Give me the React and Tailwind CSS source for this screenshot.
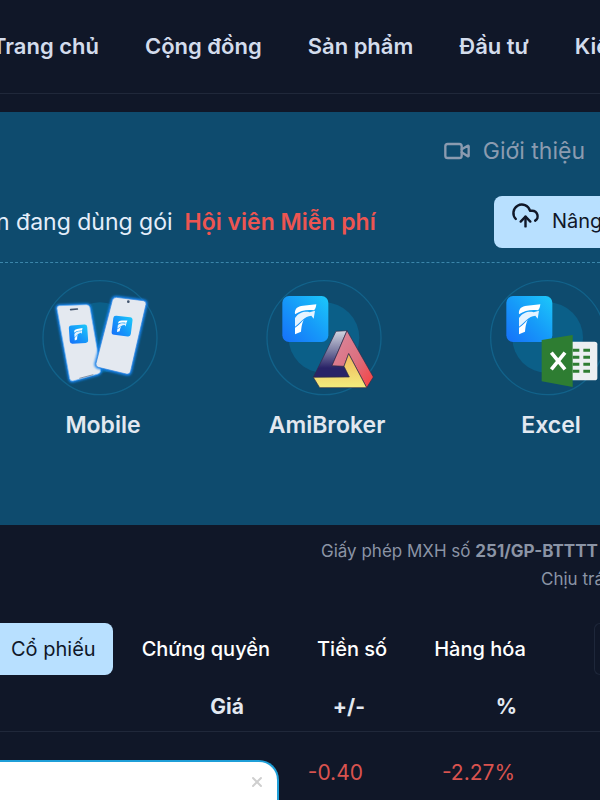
import { Video, CloudUpload, X } from 'lucide-react'

const navItems = ['Trang chủ', 'Cộng đồng', 'Sản phẩm', 'Đầu tư', 'Kiến thức']
const tabs = ['Chứng quyền', 'Tiền số', 'Hàng hóa']

function Halo({ cx }) {
  return (
    <>
      <circle cx={cx} cy="203" r="171" fill="none" stroke="#12628a" strokeWidth="4" />
      <circle cx={cx} cy="203" r="106" fill="#0b5f88" />
    </>
  )
}

// 138 x 138 app tile
function Tile({ transform }) {
  return (
    <g transform={transform}>
      <rect width="138" height="138" rx="20" fill="url(#tile)" />
      <path d="M38 55 C36 37 46 31 62 29 L102 25 C101 33 99 40 95 43 C74 40 54 44 38 55 Z" fill="#fff" />
      <path d="M38 66 C50 49 68 45 82 49 L98 44 L94 68 L87 59 C66 61 56 78 38 92 Z" fill="#e4f3ff" />
      <path d="M38 95 C50 87 57 79 64 71 C58 84 57 96 56 107 L38 115 Z" fill="#fff" />
    </g>
  )
}

function Defs() {
  return (
    <svg className="absolute size-0" aria-hidden="true">
      <defs>
        <linearGradient id="tile" x1="0" y1="1" x2="1" y2="0">
          <stop offset="0" stopColor="#1670fa" />
          <stop offset="0.5" stopColor="#169af9" />
          <stop offset="1" stopColor="#1cc9fa" />
        </linearGradient>
        <linearGradient id="navy" x1="0" y1="0" x2="0" y2="1">
          <stop offset="0" stopColor="#d3d7e2" />
          <stop offset="0.45" stopColor="#77779f" />
          <stop offset="0.8" stopColor="#292367" />
          <stop offset="1" stopColor="#292367" />
        </linearGradient>
        <linearGradient id="red" x1="0" y1="0" x2="1" y2="1">
          <stop offset="0" stopColor="#d98a9f" />
          <stop offset="0.55" stopColor="#dc7080" />
          <stop offset="1" stopColor="#f83f3d" />
        </linearGradient>
        <linearGradient id="gold" x1="0" y1="0" x2="0" y2="1">
          <stop offset="0" stopColor="#f1b65c" />
          <stop offset="1" stopColor="#f3ec7c" />
        </linearGradient>
        <filter id="glow" x="-20%" y="-20%" width="140%" height="140%">
          <feGaussianBlur stdDeviation="3" />
        </filter>
      </defs>
    </svg>
  )
}

function MobileIcon() {
  const left = 'M88 107 L169 104 Q178 104 180 113 L212 298 Q213 309 204 312 L129 333 Q121 335 119 326 L81 116 Q80 108 88 107 Z'
  const right = 'M259 82 L340 92 Q350 94 348 103 L302 303 Q299 314 289 312 L205 292 Q196 289 198 280 L247 91 Q250 82 259 82 Z'
  return (
    <svg className="size-[130px]" viewBox="24 6 390 390" aria-hidden="true">
      <Halo cx="210" />
      <path d={left} fill="#1784ef" stroke="#1784ef" strokeWidth="9" filter="url(#glow)" />
      <path d={left} fill="#e4e9f0" stroke="#69b2f5" strokeWidth="2" />
      <path d="M122 119 L142 117" stroke="#40526b" strokeWidth="5" strokeLinecap="round" />
      <path d="M148 325 L190 314" stroke="#8494a8" strokeWidth="3" />
      <Tile transform="translate(116 167) rotate(-4) scale(0.4)" />
      <path d={right} fill="#1784ef" stroke="#1784ef" strokeWidth="9" filter="url(#glow)" />
      <path d={right} fill="#e4e9f0" stroke="#2d82dc" strokeWidth="2" />
      <circle cx="295" cy="95" r="4" fill="#40526b" />
      <Tile transform="translate(251 136) rotate(7) scale(0.42)" />
    </svg>
  )
}

function AmiBrokerIcon() {
  return (
    <svg className="size-[130px]" viewBox="21 6 390 390" aria-hidden="true">
      <Halo cx="207" />
      <Tile transform="translate(82 78)" />
      <g stroke="#302b48" strokeWidth="2" strokeLinejoin="round">
        <path d="M243 184 L276 182 L231 287 L267 289 L283 321 L175 322 Z" fill="url(#navy)" />
        <path d="M276 182 L355 321 L335 353 L281 251 L267 289 L231 287 Z" fill="url(#red)" />
        <path d="M281 251 L335 353 L194 353 L175 322 L283 321 L267 289 Z" fill="url(#gold)" />
      </g>
    </svg>
  )
}

function ExcelIcon() {
  return (
    <svg className="size-[130px]" viewBox="48 6 390 390" aria-hidden="true">
      <Halo cx="233" />
      <Tile transform="translate(109 78)" />
      <rect x="290" y="215" width="92" height="116" rx="8" fill="#eceff2" />
      <path
        d="M308 241 h20 M340 241 h20 M308 262 h20 M340 262 h20 M308 283 h20 M340 283 h20 M308 304 h20 M340 304 h20"
        stroke="#2e7d32"
        strokeWidth="9"
      />
      <path d="M215 210 L308 195 V351 L215 334 Z" fill="#2e7d32" />
      <path d="M244 248 L285 298 M285 248 L244 298" stroke="#fff" strokeWidth="11" />
    </svg>
  )
}

const products = [
  { name: 'Mobile', Icon: MobileIcon },
  { name: 'AmiBroker', Icon: AmiBrokerIcon },
  { name: 'Excel', Icon: ExcelIcon },
]

export default function App() {
  return (
    <div className="relative min-h-screen overflow-hidden bg-[#101728] font-['Inter','Noto_Sans',sans-serif] text-[#e2e8f0]">
      <Defs />

      <header className="border-b border-[#20283a] pt-7 pb-[29px]">
        <nav className="-ml-2 flex gap-[46px] text-[22px] leading-9 font-semibold whitespace-nowrap text-[#d3dcec]">
          {navItems.map((item) => (
            <a key={item} href="#">{item}</a>
          ))}
        </nav>
      </header>

      <section className="mt-[18px] h-[413px] bg-[#0e4b6e]">
        <div className="flex justify-end pt-[21px] pr-[15px]">
          <a href="#" className="flex items-center gap-3 text-[23px] leading-9 text-[#8b9bb0]">
            <Video className="size-7" strokeWidth={2} />
            Giới thiệu
          </a>
        </div>

        <div className="mt-[27px] flex items-center justify-between border-b border-dashed border-[#3b86ab] pb-[14px] whitespace-nowrap">
          <p className="-ml-1 flex gap-3 text-[23px] leading-9 text-[#e4eefa]">
            n đang dùng gói
            <strong className="font-semibold text-[#ed5551]">Hội viên Miễn phí</strong>
          </p>
          <button className="flex h-[52px] w-[106px] shrink-0 gap-3 overflow-hidden rounded-l-lg bg-[#b8e0ff] pt-[5px] pl-[17px] text-xl text-[#101728]">
            <CloudUpload className="size-[29px] shrink-0" strokeWidth={2} />
            <span className="leading-10">Nâng</span>
          </button>
        </div>

        <div className="-ml-[9px] grid w-[672px] grid-cols-3 pt-[9px]">
          {products.map(({ name, Icon }) => (
            <a key={name} href="#" className="flex flex-col items-center">
              <Icon />
              <span className="mt-[5px] text-[23px] leading-9 font-semibold">{name}</span>
            </a>
          ))}
        </div>
      </section>

      <div className="flex flex-col pt-3 text-[17px] leading-7 whitespace-nowrap text-[#8b94a5]">
        <p className="ml-[321px]">
          Giấy phép MXH số <strong className="font-bold">251/GP-BTTTT</strong>
        </p>
        <p className="ml-[541px]">Chịu trách</p>
      </div>

      <div className="mt-[30px] flex items-center text-[20px] font-medium whitespace-nowrap text-white">
        <button className="h-[52px] rounded-r-lg bg-[#b8e0ff] pr-[17px] pl-[11px] font-normal text-[#101728]">Cổ phiếu</button>
        <div className="ml-[29px] flex gap-[47px]">
          {tabs.map((tab) => (
            <button key={tab}>{tab}</button>
          ))}
        </div>
        <button className="ml-auto h-[52px] w-[6px] rounded-l-lg border border-r-0 border-[#1e273a]" aria-label="Thêm" />
      </div>

      <table className="mt-2 w-full table-fixed text-right text-[21px]">
        <thead>
          <tr className="h-12 border-b border-[#20283a]">
            <th className="w-[244px] font-bold">Giá</th>
            <th className="w-[121px] font-bold">+/-</th>
            <th className="w-[152px] font-bold">%</th>
            <th aria-hidden="true" />
          </tr>
        </thead>
        <tbody>
          <tr className="h-[82px] text-[#d9534f]">
            <td />
            <td className="pr-[2px]">-0.40</td>
            <td className="pr-[2px]">-2.27%</td>
            <td />
          </tr>
        </tbody>
      </table>

      <aside className="fixed bottom-0 left-0 flex h-10 w-[279px] items-start justify-end rounded-tr-[20px] border-t-2 border-r-2 border-[#1f9fd8] bg-white pt-3 pr-3">
        <button aria-label="Đóng">
          <X className="size-4 text-[#cfcfcf]" strokeWidth={3} />
        </button>
      </aside>
    </div>
  )
}
